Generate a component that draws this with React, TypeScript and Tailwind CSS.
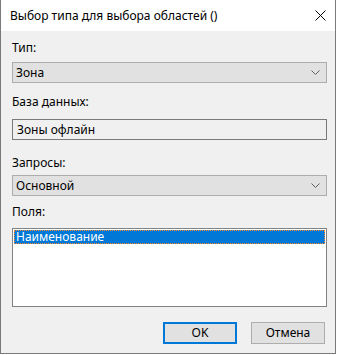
function Combo({ value }: { value: string }) {
  return (
    <div className="flex h-[21px] w-[315px] items-center justify-between border border-[#adadad] bg-[#e1e1e1] pl-[3px] pr-[6px]">
      <span>{value}</span>
      <svg width="9" height="5" viewBox="0 0 9 5" className="text-[#606060]">
        <path d="M0.5 0.5 L4.5 4.5 L8.5 0.5" fill="none" stroke="currentColor" strokeWidth="1" />
      </svg>
    </div>
  )
}

export default function App() {
  return (
    <div
      className="h-[355px] w-[337px] bg-white text-[12px] leading-[16px] text-black"
      style={{ fontFamily: '"Noto Sans", "Segoe UI", sans-serif' }}
    >
      <div className="flex h-[354px] w-[336px] flex-col border-x border-b border-[#7a7a7a]">
        <div className="flex h-[31px] shrink-0 items-center justify-between bg-white pl-[9px] pr-[9px]">
          <span>Выбор типа для выбора областей ()</span>
          <svg width="11" height="11" viewBox="0 0 11 11">
            <path d="M0.5 0.5 L10.5 10.5 M10.5 0.5 L0.5 10.5" stroke="#000" strokeWidth="1" />
          </svg>
        </div>
        <div className="flex flex-1 flex-col bg-[#f0f0f0] pl-[11px] pt-[9px]">
          <div>Тип:</div>
          <div className="mt-[6px]">
            <Combo value="Зона" />
          </div>
          <div className="mt-[11px]">База данных:</div>
          <div className="mt-[9px] flex h-[21px] w-[315px] items-center border border-[#7a7a7a] bg-[#f0f0f0] pl-[4px]">
            Зоны офлайн
          </div>
          <div className="mt-[15px]">Запросы:</div>
          <div className="mt-[4px]">
            <Combo value="Основной" />
          </div>
          <div className="mt-[8px]">Поля:</div>
          <div className="mt-[8px] h-[79px] w-[315px] border border-[#828282] bg-white p-[1px]">
            <div className="h-[14px] border border-dotted border-[#ff8728] bg-[#0078d7] pl-[1px] leading-[12px] text-white">
              Наименование
            </div>
          </div>
          <div className="mt-[15px] flex w-[315px] justify-end gap-[14px] pr-[2px]">
            <button className="h-[22px] w-[74px] border-2 border-[#0078d7] bg-[#e1e1e1]">OK</button>
            <button className="h-[22px] w-[74px] border border-[#adadad] bg-[#e1e1e1]">Отмена</button>
          </div>
        </div>
      </div>
    </div>
  )
}
